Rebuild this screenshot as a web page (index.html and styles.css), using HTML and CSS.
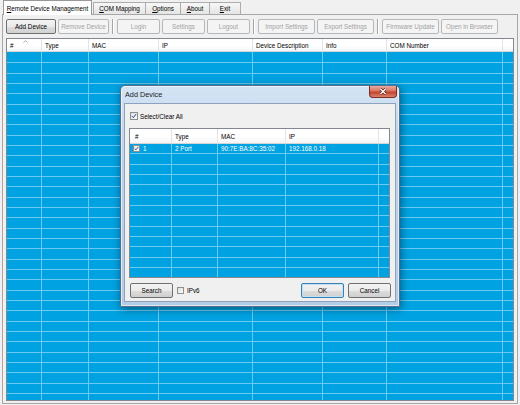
FILE: index.html
```html
<!DOCTYPE html>
<html lang="en">
<head>
    <meta charset="UTF-8">
    <title>Remote Device Management</title>
    <link rel="stylesheet" href="styles.css">
</head>
<body>
    <div class="window">
        <div class="tabs">
            <div class="tab tab-active tab-remote"><u>R</u>emote Device Management</div>
            <div class="tab tab-com"><u>C</u>OM Mapping</div>
            <div class="tab tab-options"><u>O</u>ptions</div>
            <div class="tab tab-about"><u>A</u>bout</div>
            <div class="tab tab-exit"><u>E</u>xit</div>
        </div>

        <div class="panel">
            <div class="toolbar">
                <button class="btn btn-add">Add Device</button>
                <button class="btn btn-remove" disabled>Remove Device</button>
                <span class="tool-sep"></span>
                <button class="btn btn-small" disabled>Login</button>
                <button class="btn btn-small" disabled>Settings</button>
                <button class="btn btn-small" disabled>Logout</button>
                <span class="tool-sep"></span>
                <button class="btn" disabled>Import Settings</button>
                <button class="btn" disabled>Export Settings</button>
                <span class="tool-sep"></span>
                <button class="btn" disabled>Firmware Update</button>
                <button class="btn" disabled>Open in Browser</button>
            </div>

            <div class="grid">
                <div class="grid-head">
                    <div class="head-cell c-num">#
                        <svg class="sort-arrow" width="5" height="3" viewBox="0 0 5 3"><path d="M0.5 2.6 L2.5 0.6 L4.5 2.6" fill="none" stroke="#8ea2bc" stroke-width="0.9"/></svg>
                    </div>
                    <div class="head-cell c-type">Type</div>
                    <div class="head-cell c-mac">MAC</div>
                    <div class="head-cell c-ip">IP</div>
                    <div class="head-cell c-desc">Device Description</div>
                    <div class="head-cell c-info">Info</div>
                    <div class="head-cell c-com">COM Number</div>
                    <div class="head-cell c-fill"></div>
                </div>
                <div class="grid-body grid-body-main">
                    <div class="col c-num"></div>
                    <div class="col c-type"></div>
                    <div class="col c-mac"></div>
                    <div class="col c-ip"></div>
                    <div class="col c-desc"></div>
                    <div class="col c-info"></div>
                    <div class="col c-com"></div>
                    <div class="col c-fill"></div>
                </div>
            </div>
        </div>

        <!-- Add Device dialog -->
        <div class="dialog">
            <div class="dialog-title">
                <span class="dialog-title-text">Add Device</span>
                <span class="close-btn">
                    <svg width="8" height="7" viewBox="0 0 8 7">
                        <path d="M1.5 1 L6.5 6 M6.5 1 L1.5 6" stroke="#5b1b14" stroke-width="2.6" fill="none"/>
                        <path d="M1.5 1 L6.5 6 M6.5 1 L1.5 6" stroke="#fff" stroke-width="1.4" fill="none"/>
                    </svg>
                </span>
            </div>
            <div class="dialog-body">
                <label class="check-row">
                    <span class="check check-lg">
                        <svg width="6" height="6" viewBox="0 0 7 7"><path d="M1 3.6 L2.8 5.4 L6 1.2" fill="none" stroke="#22427a" stroke-width="1.1"/></svg>
                    </span>
                    Select/Clear All
                </label>

                <div class="dgrid">
                    <div class="dgrid-head">
                        <div class="head-cell d-num">#</div>
                        <div class="head-cell d-type">Type</div>
                        <div class="head-cell d-mac">MAC</div>
                        <div class="head-cell d-ip">IP</div>
                        <div class="head-cell c-fill"></div>
                    </div>
                    <div class="grid-body">
                        <div class="col d-num">
                            <div class="cell">
                                <span class="check check-row-box">
                                    <svg width="5" height="5" viewBox="0 0 7 7"><path d="M1 3.6 L2.8 5.4 L6 1.2" fill="none" stroke="#22427a" stroke-width="1.2"/></svg>
                                </span>
                                1
                            </div>
                        </div>
                        <div class="col d-type"><div class="cell">2 Port</div></div>
                        <div class="col d-mac"><div class="cell">90:7E:BA:8C:35:02</div></div>
                        <div class="col d-ip"><div class="cell">192.168.0.18</div></div>
                        <div class="col c-fill"></div>
                    </div>
                </div>

                <div class="dialog-foot">
                    <button class="dbtn">Search</button>
                    <label class="ipv6">
                        <span class="check"></span>
                        IPv6
                    </label>
                    <button class="dbtn dbtn-default">OK</button>
                    <button class="dbtn dbtn-cancel">Cancel</button>
                </div>
            </div>
        </div>
    </div>
</body>
</html>
```

FILE: styles.css
```css
* {
    margin: 0;
    padding: 0;
    box-sizing: border-box;
}

body {
    width: 520px;
    height: 405px;
    overflow: hidden;
    background: #f0f0f0;
    font-family: "Liberation Sans", Arial, sans-serif;
    font-size: 6.3px;
    color: #000;
}

.window {
    position: relative;
    height: 405px;
    padding: 0 2px;
}

/* tab strip */
.tabs {
    display: flex;
    align-items: flex-end;
    height: 14px;
    padding-left: 1px;
}

.tab {
    height: 12px;
    display: flex;
    align-items: center;
    justify-content: center;
    border: 1px solid #acacac;
    border-bottom: none;
    background: linear-gradient(#f7f7f7, #e5e5e5);
    margin-left: -1px;
    white-space: nowrap;
}

.tab-active {
    height: 15px;
    margin-bottom: -1px;
    margin-left: 0;
    background: #fff;
    border-color: #989898;
    position: relative;
    z-index: 1;
}

.tab-remote { width: 89px; }
.tab-com { width: 53px; margin-left: 1px; }
.tab-options { width: 36px; }
.tab-about { width: 30px; }
.tab-exit { width: 32px; }

.panel {
    height: 390px;
    border: 1px solid #a7a7a7;
    background: #f0f0f0;
    padding: 4px 3px 2px 3px;
    display: flex;
    flex-direction: column;
}

/* toolbar */
.toolbar {
    display: flex;
    gap: 2px;
    height: 15px;
    flex: none;
}

.btn {
    width: 57px;
    height: 15px;
    border: 1px solid #707070;
    border-radius: 2px;
    background: linear-gradient(#f3f3f3 0%, #ebebeb 50%, #dddddd 51%, #d1d1d1 100%);
    font-family: inherit;
    font-size: 6.3px;
    color: #000;
    white-space: nowrap;
}

.btn:disabled {
    border-color: #b5b8bb;
    background: #f4f4f4;
    color: #a2a2a2;
}

.btn-add { width: 50px; }
.btn-remove { width: 51px; }
.btn-small { width: 43px; }

.tool-sep {
    width: 0;
    height: 15px;
    margin: 0 1px;
    border-left: 1px solid #a5a5a5;
    border-right: 1px solid #fff;
}

/* list views */
.grid {
    margin-top: 4px;
    height: 363px;
    border: 1px solid #828790;
    display: flex;
    flex-direction: column;
    background: #00a2e2;
}

.grid-head {
    display: flex;
    height: 13px;
    flex: none;
}

.head-cell {
    position: relative;
    height: 100%;
    display: flex;
    align-items: center;
    padding-left: 3px;
    border-right: 1px solid #e3e4e6;
    border-bottom: 1px solid #d5d5d5;
    background: linear-gradient(#fff 0%, #fff 55%, #f3f4f6 100%);
    white-space: nowrap;
}

.sort-arrow {
    position: absolute;
    top: 1px;
    left: 16px;
}

.grid-body {
    flex: 1;
    display: flex;
    background-color: #00a2e2;
    background-image: repeating-linear-gradient(to bottom, transparent 0, transparent 9.33px, #6acaf0 9.33px, #6acaf0 10.33px);
}

.grid-body-main {
    background-position: 0 1px;
}

.col {
    height: 100%;
    border-right: 1px solid #6acaf0;
}

.c-num { width: 35px; }
.c-type { width: 47px; }
.c-mac { width: 70px; }
.c-ip { width: 94px; }
.c-desc { width: 70px; }
.c-info { width: 64px; }
.c-com { width: 116px; }

.c-fill {
    flex: 1;
    border-right: none;
}

/* dialog */
.dialog {
    position: absolute;
    left: 120px;
    top: 85px;
    width: 280px;
    height: 222px;
    border: 1px solid #566f8c;
    border-radius: 5px 5px 0 0;
    background: linear-gradient(#d4e4f4, #bed5ec 25%, #b4cde7);
    padding: 0 3px 4px;
    box-shadow: 1px 2px 8px rgba(0, 0, 0, 0.45), inset 0 0 0 1px rgba(255, 255, 255, 0.55);
    display: flex;
    flex-direction: column;
}

.dialog-title {
    height: 17px;
    flex: none;
    margin: 0 -3px;
    padding: 0 2px 0 4px;
    display: flex;
    align-items: flex-start;
}

.dialog-title-text {
    font-size: 7.3px;
    line-height: 17px;
    color: #1b1b1b;
}

.close-btn {
    margin-left: auto;
    width: 28px;
    height: 12px;
    border: 1px solid #7e2b22;
    border-top: none;
    border-radius: 0 0 4px 4px;
    background: linear-gradient(#e9ab9f 0%, #d87563 45%, #c4402e 55%, #d9826c 100%);
    display: flex;
    align-items: center;
    justify-content: center;
}

.dialog-body {
    flex: 1;
    background: #f0f0f0;
    border: 1px solid #8ea3bb;
    padding: 8px 5px 3px 4px;
    display: flex;
    flex-direction: column;
}

.check-row {
    display: flex;
    align-items: center;
    gap: 2px;
    height: 8px;
    margin-bottom: 8px;
    padding-left: 1px;
}

.check {
    width: 7px;
    height: 7px;
    flex: none;
    border: 1px solid #8e8f8f;
    background: linear-gradient(135deg, #dcdcdc, #fff);
    display: flex;
    align-items: center;
    justify-content: center;
}

.check-lg {
    width: 8px;
    height: 8px;
}

.dgrid {
    height: 150px;
    border: 1px solid #828790;
    display: flex;
    flex-direction: column;
    background: #00a2e2;
}

.dgrid-head {
    display: flex;
    height: 15px;
    flex: none;
}

.d-num { width: 42px; }
.d-type { width: 46px; }
.d-mac { width: 68px; }
.d-ip { width: 93px; }

.dgrid-head .d-num { padding-left: 5px; }

.cell {
    height: 9.33px;
    display: flex;
    align-items: center;
    padding-left: 3px;
    color: #fff;
    white-space: nowrap;
}

.check-row-box {
    margin-right: 3px;
    background: linear-gradient(135deg, #e8e8e8, #fff);
}

.dialog-foot {
    margin-top: 5px;
    margin-right: -1px;
    height: 15px;
    flex: none;
    display: flex;
    align-items: center;
    padding-left: 1px;
}

.dbtn {
    width: 43px;
    height: 15px;
    border: 1px solid #707070;
    border-radius: 2px;
    background: linear-gradient(#f3f3f3 0%, #ebebeb 50%, #dddddd 51%, #cfcfcf 100%);
    font-family: inherit;
    font-size: 6.3px;
    color: #000;
}

.dbtn-default {
    margin-left: auto;
    border-color: #3c7fb1;
    box-shadow: inset 0 0 0 1px #bfe4f9;
}

.dbtn-cancel {
    margin-left: 4px;
}

.ipv6 {
    display: flex;
    align-items: center;
    gap: 3px;
    margin-left: 4px;
}
```
